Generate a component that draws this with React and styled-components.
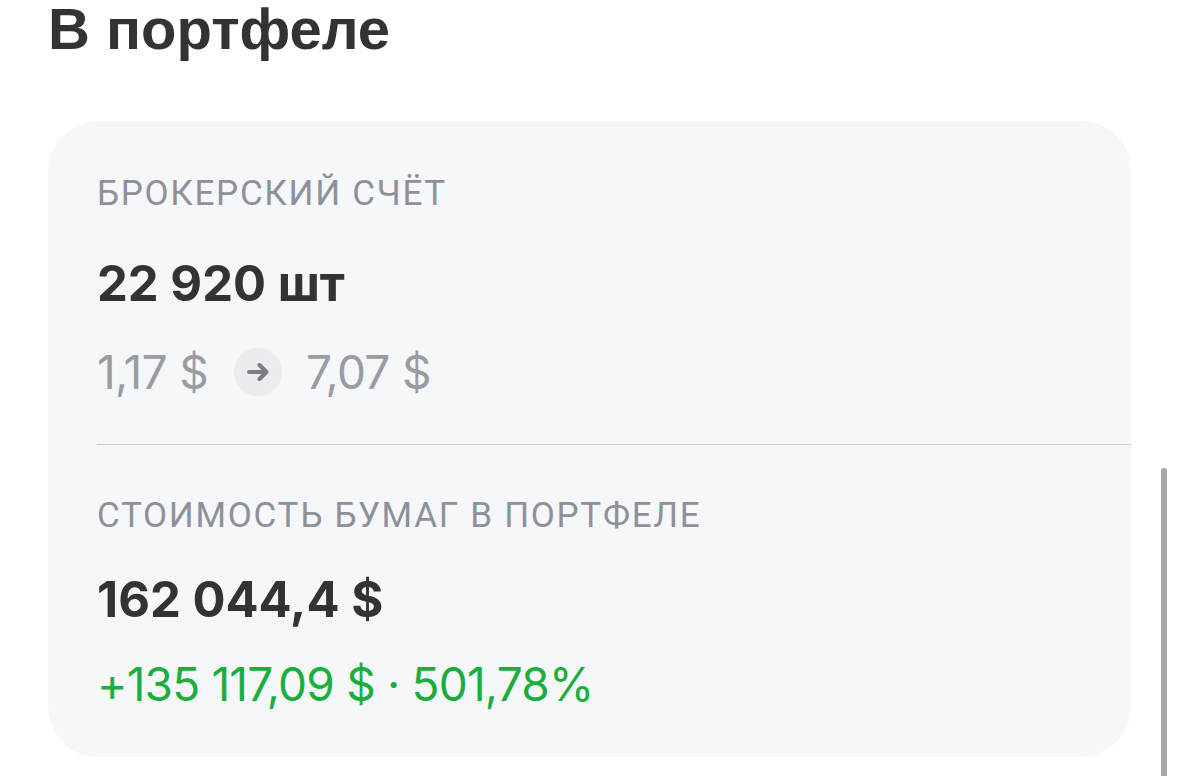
import React from 'react';
import styled, {createGlobalStyle} from 'styled-components';

const GlobalStyle = createGlobalStyle`
  html, body {
    margin: 0;
    padding: 0;
    background: #ffffff;
    overflow: hidden;
  }
`

const Page = styled.div`
  position: relative;
  width: 1179px;
  height: 776px;
  padding-left: 48px;
  box-sizing: border-box;
  overflow: hidden;
`

const Title = styled.h1`
  margin: 0;
  font-family: "Liberation Sans", Arial, sans-serif;
  font-weight: 700;
  font-size: 58px;
  line-height: 58px;
  color: #333333;
`

const Card = styled.div`
  margin-top: 63px;
  width: 1083px;
  height: 636px;
  box-sizing: border-box;
  padding: 55px 0 0 49px;
  background: #f6f7f9;
  border-radius: 50px;
`

const Section = styled.div`
  display: flex;
  flex-direction: column;
  padding-right: 49px;
`

const Label = styled.div`
  font-family: Roboto, "Noto Sans", sans-serif;
  font-size: 35px;
  line-height: 35px;
  letter-spacing: 1.7px;
  color: #8e9199;
  text-transform: uppercase;
`

const Value = styled.div`
  margin-top: ${props => props.gap}px;
  font-family: Inter, "Noto Sans", sans-serif;
  font-weight: 700;
  font-size: 49px;
  line-height: 48px;
  color: #333333;
`

const PriceRow = styled.div`
  margin-top: 40px;
  display: flex;
  align-items: center;
  height: 48px;
`

const Price = styled.span`
  font-family: Inter, "Noto Sans", sans-serif;
  font-size: 46px;
  line-height: 48px;
  letter-spacing: -0.7px;
  color: #9a9ca3;
`

const ArrowCircle = styled.span`
  width: 48px;
  height: 48px;
  margin: 0 24px 0 26px;
  border-radius: 50%;
  background: #ebecef;
  display: flex;
  align-items: center;
  justify-content: center;
`

const Divider = styled.div`
  height: 1px;
  background: #cfd0d4;
  margin: 48px 0 53px;
`

const Change = styled.div`
  margin-top: 36px;
  font-family: Inter, "Noto Sans", sans-serif;
  font-size: 46px;
  line-height: 48px;
  letter-spacing: -0.8px;
  color: #1aaf3c;
`

const Scrollbar = styled.div`
  position: absolute;
  left: 1161px;
  top: 468px;
  width: 6px;
  height: 330px;
  border-radius: 3px;
  background: #a6a6a6;
`

const Arrow = () => (
  <svg width="24" height="24" viewBox="0 0 24 24" fill="none">
    <path d="M3 12h17M13.5 5l7 7-7 7" stroke="#7b7e86" strokeWidth="4" strokeLinecap="round" strokeLinejoin="round"/>
  </svg>
)

const App = () => (
  <Page>
    <GlobalStyle/>
    <Title>В портфеле</Title>
    <Card>
      <Section>
        <Label>Брокерский счёт</Label>
        <Value gap={49}>22 920 шт</Value>
        <PriceRow>
          <Price>1,17 $</Price>
          <ArrowCircle><Arrow/></ArrowCircle>
          <Price>7,07 $</Price>
        </PriceRow>
      </Section>
      <Divider/>
      <Section>
        <Label>Стоимость бумаг в портфеле</Label>
        <Value gap={43}>162 044,4 $</Value>
        <Change>+135 117,09 $ · 501,78%</Change>
      </Section>
    </Card>
    <Scrollbar/>
  </Page>
)

export default App;
